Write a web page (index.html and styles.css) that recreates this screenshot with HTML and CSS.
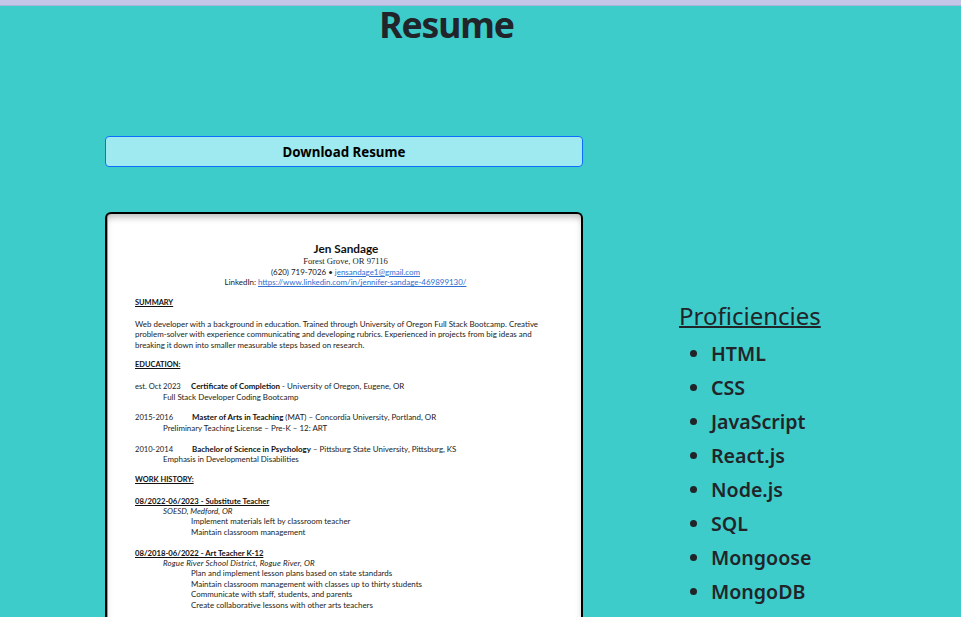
FILE: index.html
```
<!DOCTYPE html>
<html lang="en">
<head>
<meta charset="utf-8">
<title>Resume</title>
<link rel="stylesheet" href="styles.css">
</head>
<body>
<header class="top-strip"></header>
<h1 class="title">Resume</h1>
<main class="layout">
  <section class="resume">
    <a class="download">Download Resume</a>
    <article class="sheet">
      <h2 class="name">Jen Sandage</h2>
      <p class="center serif">Forest Grove, OR 97116</p>
      <p class="center">(620) 719-7026 • <a class="link">jensandage1@gmail.com</a></p>
      <p class="center">LinkedIn: <a class="link">https://www.linkedin.com/in/jennifer-sandage-469899130/</a></p>
      <h3>SUMMARY</h3>
      <p class="gap">Web developer with a background in education. Trained through University of Oregon Full Stack Bootcamp. Creative</p>
      <p>problem-solver with experience communicating and developing rubrics. Experienced in projects from big ideas and</p>
      <p>breaking it down into smaller measurable steps based on research.</p>
      <h3>EDUCATION:</h3>
      <p class="gap"><span class="year">est. Oct 2023</span><b>Certificate of Completion</b> - University of Oregon, Eugene, OR</p>
      <p class="in1">Full Stack Developer Coding Bootcamp</p>
      <p class="gap"><span class="year wide">2015-2016</span><b>Master of Arts in Teaching</b> (MAT) – Concordia University, Portland, OR</p>
      <p class="in1">Preliminary Teaching License – Pre-K – 12: ART</p>
      <p class="gap"><span class="year wide">2010-2014</span><b>Bachelor of Science in Psychology</b> – Pittsburg State University, Pittsburg, KS</p>
      <p class="in1">Emphasis in Developmental Disabilities</p>
      <h3>WORK HISTORY:</h3>
      <h3 class="job">08/2022-06/2023 - Substitute Teacher</h3>
      <p class="in1"><i>SOESD, Medford, OR</i></p>
      <p class="in2">Implement materials left by classroom teacher</p>
      <p class="in2">Maintain classroom management</p>
      <h3 class="job">08/2018-06/2022 - Art Teacher K-12</h3>
      <p class="in1 district"><i>Rogue River School District, Rogue River, OR</i></p>
      <p class="in2">Plan and implement lesson plans based on state standards</p>
      <p class="in2">Maintain classroom management with classes up to thirty students</p>
      <p class="in2">Communicate with staff, students, and parents</p>
      <p class="in2">Create collaborative lessons with other arts teachers</p>
    </article>
  </section>
  <aside class="skills">
    <h2 class="skills-title">Proficiencies</h2>
    <ul>
      <li>HTML</li>
      <li>CSS</li>
      <li>JavaScript</li>
      <li>React.js</li>
      <li>Node.js</li>
      <li>SQL</li>
      <li>Mongoose</li>
      <li>MongoDB</li>
    </ul>
  </aside>
</main>
</body>
</html>
```
FILE: styles.css
```
* { box-sizing: border-box; }
body {
  margin: 0;
  height: 617px;
  overflow: hidden;
  display: flex;
  flex-direction: column;
  background: #3eccca;
  color: #212529;
  font-family: "Noto Sans", sans-serif;
}
.top-strip { flex: none; height: 6px; background: #c5c5e8; border-bottom: 1px solid #a9b5d8; }
.title {
  flex: none;
  margin: 0;
  padding-right: 68px;
  height: 130px;
  font: 700 35.5px/37px "Noto Sans", sans-serif;
  letter-spacing: -1.1px;
  text-align: center;
}
.layout { flex: 1; min-height: 0; display: flex; padding-left: 105px; }
.resume { width: 478px; display: flex; flex-direction: column; }
.download {
  flex: none;
  height: 31px;
  border: 1px solid #0d6efd;
  border-radius: 4px;
  background: #9eeaf0;
  color: #000;
  font: 700 13.3px/30px "Noto Sans", sans-serif;
  text-align: center;
}
.sheet {
  flex: 1;
  min-height: 0;
  overflow: hidden;
  margin-top: 45px;
  padding: 28px 28px 0;
  border: 2px solid #000;
  border-bottom: 0;
  border-radius: 6px 6px 0 0;
  background: #fff;
  box-shadow: inset 1px 0 0 #999, inset 0 5px 7px -2px #bbb;
  color: #222;
  font: 7.95px/10.4px Lato, sans-serif;
  white-space: nowrap;
}
.sheet p { margin: 0; }
.sheet h3 {
  width: max-content;
  margin: 10.4px 0 0;
  color: #111;
  font-family: inherit;
  font-size: 7.45px;
  font-weight: 700;
  line-height: inherit;
  text-decoration: underline;
}
.sheet h3.job { font-size: 7.72px; }
.sheet .name {
  margin: 0;
  padding-left: 4px;
  height: 14.4px;
  color: #111;
  font: 700 11.8px/13px Lato, sans-serif;
  text-align: center;
}
.sheet b { color: #111; font-size: 7.92px; }
.sheet .gap { margin-top: 10.4px; }
.center { text-align: center; padding-left: 3px; }
.serif { font-family: "Liberation Serif", serif; font-size: 8.6px; }
.link { color: #2f6fd0; text-decoration: underline; }
.year { display: inline-block; width: 56px; font-size: 7.6px; line-height: 1; }
.year.wide { width: 57px; }
.in1 { padding-left: 28px; }
.in2 { padding-left: 56px; }
.district { letter-spacing: 0.16px; }
.skills { margin-left: 96px; padding-top: 161px; }
.skills-title {
  margin: 0;
  font: 400 24px/38px "Noto Sans", sans-serif;
  text-decoration: underline;
  text-decoration-thickness: 2px;
}
.skills ul {
  margin: 2px 0 0;
  padding-left: 32px;
  font: 600 19.6px/34px "Noto Sans", sans-serif;
}
```
